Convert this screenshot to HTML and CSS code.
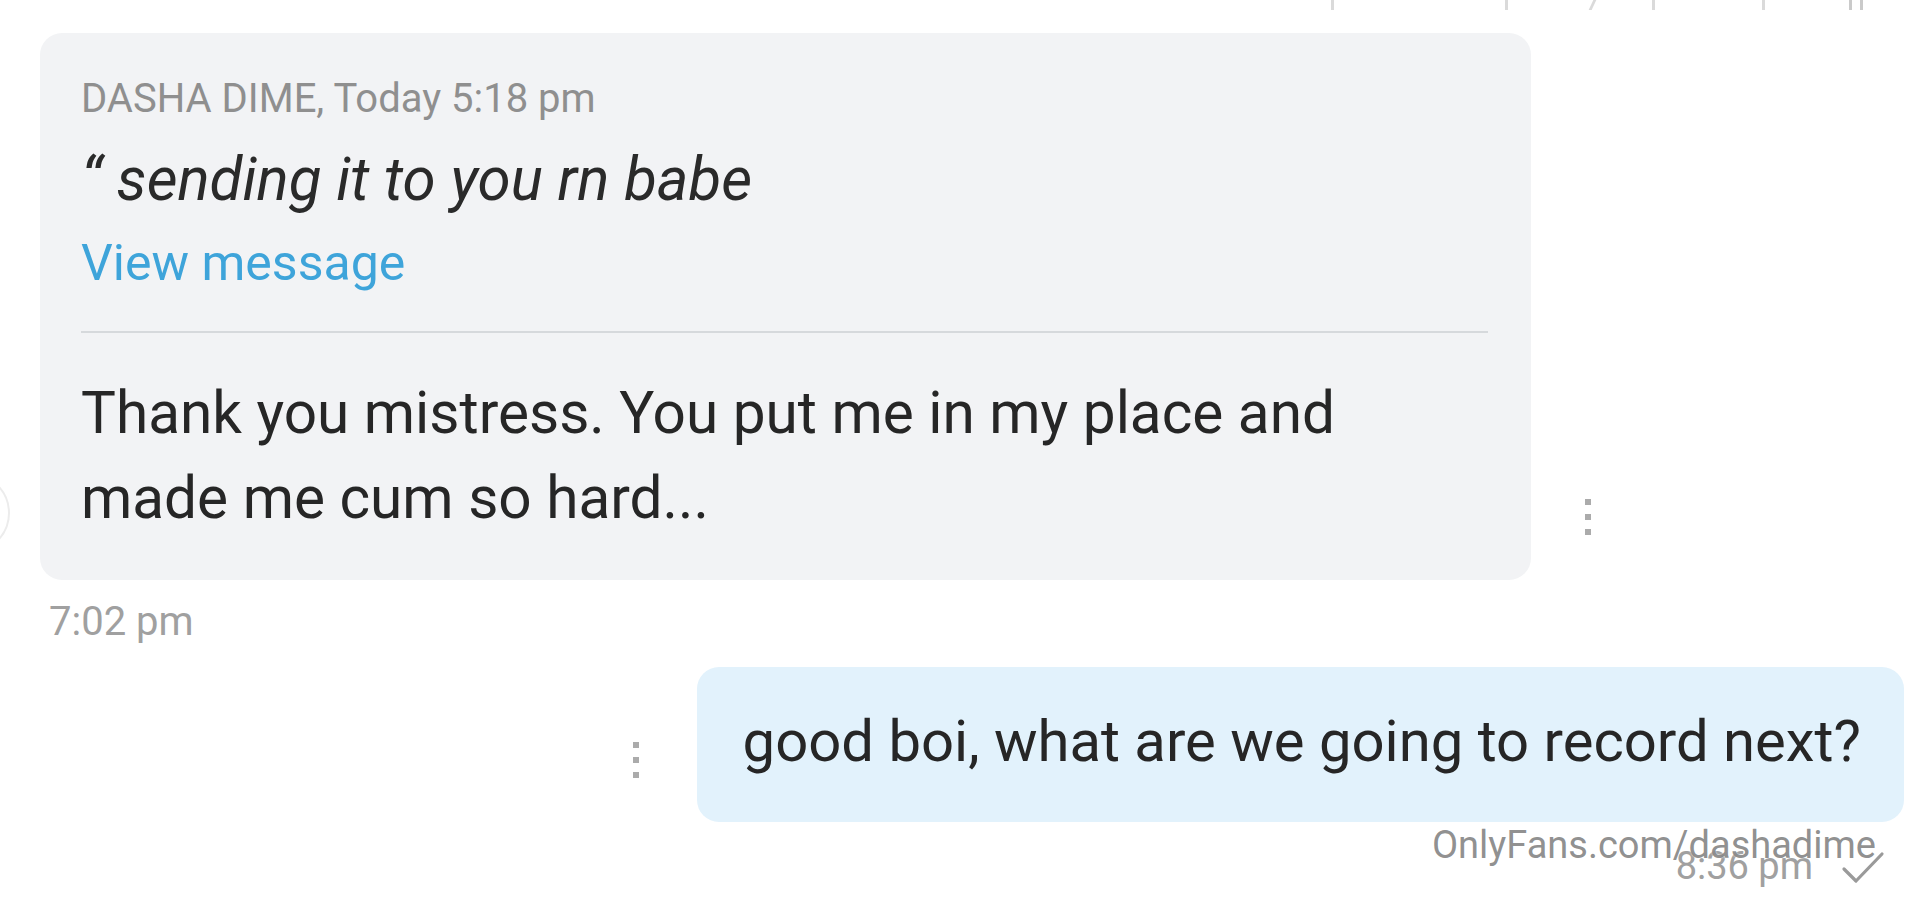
FILE: index.html
```html
<!DOCTYPE html>
<html lang="en">
<head>
  <meta charset="UTF-8">
  <meta name="viewport" content="width=device-width, initial-scale=1.0">
  <title>Messages</title>
  <link rel="stylesheet" href="styles.css">
</head>
<body>

  <!-- Bits of the previous message, cut off at the top -->
  <div class="peek">
    <span class="tick"></span>
    <span class="tick"></span>
    <span class="tick slant"></span>
    <span class="tick"></span>
    <span class="tick"></span>
    <span class="tick double"></span>
  </div>

  <!-- Incoming message with a quoted reply -->
  <div class="row incoming">
    <div class="avatar"></div>
    <div class="bubble bubble-in">
      <div class="quote-meta">DASHA DIME, Today 5:18 pm</div>
      <div class="quote-text">&ldquo; sending it to you rn babe</div>
      <a href="#" class="quote-link">View message</a>
      <hr class="divider">
      <p class="msg-text">Thank you mistress. You put me in my place and<br>made me cum so hard...</p>
    </div>
    <button class="more more-in"><span></span><span></span><span></span></button>
  </div>
  <div class="stamp stamp-in">7:02 pm</div>

  <!-- Outgoing message -->
  <div class="row outgoing">
    <button class="more more-out"><span></span><span></span><span></span></button>
    <div class="bubble bubble-out">
      <p class="msg-text single">good boi, what are we going to record next?</p>
    </div>
  </div>
  <div class="stamp stamp-out">
    <span>8:36 pm</span>
    <svg class="check" width="44" height="36" viewBox="0 0 44 36">
      <path d="M3 19 L15 31 L41 4" fill="none" stroke="#9a9a9a" stroke-width="3.2" stroke-linecap="round" stroke-linejoin="round"/>
    </svg>
  </div>

  <div class="watermark">OnlyFans.com/dashadime</div>

</body>
</html>
```

FILE: styles.css
```css
/* General styles */
body {
  background-color: #ffffff;
  font-family: 'Roboto', 'Liberation Sans', sans-serif;
  color: #262626;
  margin: 0;
  height: 915px;
  overflow: hidden;
  position: relative;
}

/* Cut-off line above */
.peek {
  display: flex;
  height: 10px;
  padding-left: 1331px;
}

.tick {
  width: 3px;
  height: 10px;
  background-color: #dadada;
}

.tick:nth-child(2) { margin-left: 171px; }
.tick:nth-child(3) { margin-left: 83px; }
.tick:nth-child(4) { margin-left: 58px; }
.tick:nth-child(5) { margin-left: 107px; }
.tick:nth-child(6) { margin-left: 84px; }

.tick.slant {
  transform: skewX(-25deg);
}

.tick.double {
  width: 14px;
  background: none;
  border-left: 3px solid #cacaca;
  border-right: 3px solid #cacaca;
  box-sizing: border-box;
}

/* Rows */
.row {
  display: flex;
}

.incoming {
  margin-top: 23px;
  align-items: flex-end;
}

.outgoing {
  margin-top: 23px;
  justify-content: flex-end;
  align-items: center;
  padding-right: 16px;
}

.avatar {
  width: 80px;
  height: 80px;
  margin-left: -70px;
  margin-right: 30px;
  margin-bottom: 27px;
  border-radius: 50%;
  border: 2px solid #ececec;
  box-sizing: border-box;
  flex-shrink: 0;
}

/* Bubbles */
.bubble {
  border-radius: 22px;
}

.bubble-in {
  width: 1491px;
  box-sizing: border-box;
  background-color: #f2f3f5;
  padding: 43px 43px 39px 41px;
}

.bubble-out {
  background-color: #e2f2fc;
  padding: 40px 43px 47px 46px;
}

.quote-meta {
  font-size: 40px;
  line-height: 46px;
  color: #8f8f8f;
}

.quote-text {
  margin-top: 25px;
  font-size: 60px;
  line-height: 66px;
  font-style: italic;
  color: #2a2a2a;
}

.quote-link {
  display: block;
  margin-top: 22px;
  font-size: 50px;
  line-height: 56px;
  color: #3ea4da;
  text-decoration: none;
}

.divider {
  margin: 40px 0 0;
  border: none;
  height: 2px;
  background-color: #d6d9dc;
}

.msg-text {
  margin: 38px 0 0;
  font-size: 58.5px;
  line-height: 85px;
  color: #262626;
}

.msg-text.single {
  margin: 0;
  font-size: 58px;
  line-height: 68px;
}

/* Kebab buttons */
.more {
  background: none;
  border: none;
  padding: 0;
  width: 24px;
  display: flex;
  flex-direction: column;
  align-items: center;
  gap: 9px;
  cursor: pointer;
}

.more span {
  width: 6px;
  height: 6px;
  background-color: #ababab;
}

.more-in {
  margin-left: 45px;
  margin-bottom: 45px;
}

.more-out {
  margin-right: 49px;
  margin-top: 30px;
}

/* Timestamps */
.stamp {
  line-height: 44px;
  color: #a0a0a0;
}

.stamp-in {
  font-size: 40px;
  margin-top: 20px;
  margin-left: 49px;
}

.stamp-out {
  font-size: 38px;
  margin-top: 22px;
  display: flex;
  justify-content: flex-end;
  align-items: center;
  gap: 28px;
  padding-right: 35px;
}

.check {
  display: block;
  margin-top: 4px;
}

/* Watermark over the picture */
.watermark {
  position: absolute;
  top: 823px;
  right: 44px;
  font-size: 38px;
  line-height: 44px;
  color: rgba(115, 115, 115, 0.8);
  text-shadow: 0 0 2px rgba(255, 255, 255, 0.9);
}
```
